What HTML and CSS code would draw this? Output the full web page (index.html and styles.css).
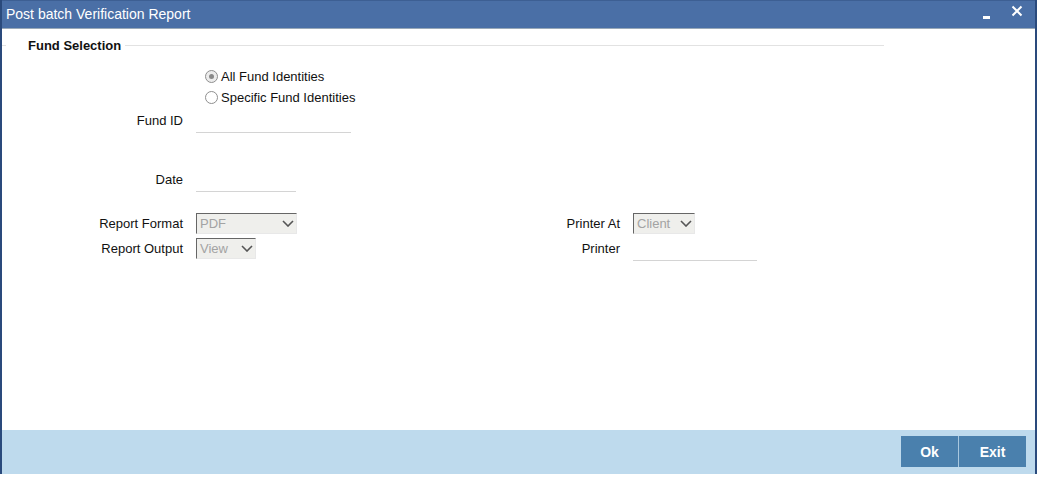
FILE: index.html
```html
<!DOCTYPE html>
<html lang="en">

<head>
    <meta charset="UTF-8">
    <meta name="viewport" content="width=device-width, initial-scale=1.0">
    <title>Post batch Verification Report</title>
    <link rel="stylesheet" href="styles.css">
</head>

<body>
    <section class="window">
        <section class="titlebar">
            <span class="title">Post batch Verification Report</span>
            <section class="title-tools">
                <span class="tool-min"></span>
                <svg class="tool-close" width="12" height="12" viewBox="0 0 12 12">
                    <path d="M1.5 1.5 L10.5 10.5 M10.5 1.5 L1.5 10.5" stroke="#fff" stroke-width="2" fill="none" />
                </svg>
            </section>
        </section>

        <section class="content">
            <section class="legend">
                <span class="legend-line short"></span>
                <span class="legend-text">Fund Selection</span>
                <span class="legend-line long"></span>
            </section>

            <section class="radios">
                <label class="radio-row"><span class="radio checked"></span>All Fund Identities</label>
                <label class="radio-row"><span class="radio"></span>Specific Fund Identities</label>
            </section>

            <section class="row row-fund">
                <span class="label">Fund ID</span>
                <span class="input w-fund"></span>
            </section>

            <section class="row row-date">
                <span class="label">Date</span>
                <span class="input w-date"></span>
            </section>

            <section class="row row-format">
                <span class="label">Report Format</span>
                <section class="field">
                    <span class="select w-pdf"><span>PDF</span>
                        <svg width="12" height="7" viewBox="0 0 12 7"><path d="M1 1 L6 6 L11 1" stroke="#555" stroke-width="1.6" fill="none" /></svg>
                    </span>
                </section>
                <span class="label label-right">Printer At</span>
                <span class="select w-client"><span>Client</span>
                    <svg width="12" height="7" viewBox="0 0 12 7"><path d="M1 1 L6 6 L11 1" stroke="#555" stroke-width="1.6" fill="none" /></svg>
                </span>
            </section>

            <section class="row row-output">
                <span class="label">Report Output</span>
                <section class="field">
                    <span class="select w-view"><span>View</span>
                        <svg width="12" height="7" viewBox="0 0 12 7"><path d="M1 1 L6 6 L11 1" stroke="#555" stroke-width="1.6" fill="none" /></svg>
                    </span>
                </section>
                <span class="label label-right">Printer</span>
                <span class="input w-printer"></span>
            </section>
        </section>

        <section class="footer">
            <button class="btn">Ok</button>
            <button class="btn btn-exit">Exit</button>
        </section>
    </section>
</body>

</html>
```

FILE: styles.css
```css
body {
    margin: 0;
    padding: 0;
    background: #fff;
    font-family: "Liberation Sans", Arial, sans-serif;
    font-size: 13px;
    color: #111;
}

.window {
    width: 1033px;
    height: 474px;
    border-left: 2px solid #2a4a7c;
    border-right: 2px solid #2a4a7c;
    display: flex;
    flex-direction: column;
}

.titlebar {
    height: 27px;
    background: #4a6fa6;
    border-top: 1px solid #3d5f93;
    border-bottom: 1px solid #98a8b8;
    display: flex;
    align-items: center;
    justify-content: space-between;
    color: #fff;
}

.title {
    font-size: 14px;
    padding-left: 4px;
    margin-top: -1px;
}

.title-tools {
    display: flex;
    align-items: center;
    gap: 21px;
    padding-right: 12px;
}

.tool-min {
    width: 7px;
    height: 3px;
    background: #fff;
    margin-top: 6px;
}

.tool-close {
    margin-top: -8px;
}

.content {
    flex: 1;
}

/* fieldset heading */
.legend {
    display: flex;
    align-items: center;
    height: 18px;
    margin-top: 7px;
}

.legend-line {
    height: 1px;
    background: #e2e2e2;
}

.legend-line.short {
    width: 4px;
    margin-right: 22px;
}

.legend-line.long {
    width: 759px;
    margin-left: 4px;
}

.legend-text {
    font-weight: 700;
}

.radios {
    margin-top: 12px;
    padding-left: 203px;
    display: flex;
    flex-direction: column;
    gap: 1px;
}

.radio-row {
    height: 20px;
    display: flex;
    align-items: center;
}

.radio {
    width: 11px;
    height: 11px;
    border: 1px solid #8f8f8f;
    border-radius: 50%;
    background: #fff;
    margin-right: 3px;
    display: flex;
    align-items: center;
    justify-content: center;
}

.radio.checked {
    background: #ececec;
}

.radio.checked::after {
    content: "";
    width: 5px;
    height: 5px;
    border-radius: 50%;
    background: #8a8a8a;
}

.row {
    display: flex;
    align-items: flex-start;
}

.label {
    width: 181px;
    height: 21px;
    line-height: 21px;
    text-align: right;
    margin-right: 13px;
}

.label-right {
    width: 124px;
}

.field {
    width: 300px;
}

.input {
    height: 22px;
    border-bottom: 1px solid #d4d4d4;
}

.row-fund {
    margin-top: 3px;
}

.row-fund .label {
    height: 22px;
    line-height: 22px;
}

.w-fund {
    width: 155px;
}

.row-date {
    margin-top: 36px;
}

.w-date {
    width: 100px;
}

.row-format {
    margin-top: 21px;
}

.row-output {
    margin-top: 4px;
}

.w-printer {
    width: 124px;
}

.select {
    height: 19px;
    border-top: 1px solid #666;
    border-left: 1px solid #666;
    border-right: 1px solid #e8e8e8;
    border-bottom: 1px solid #e8e8e8;
    background: #efefec;
    color: #a3a3a3;
    display: flex;
    align-items: center;
    justify-content: space-between;
    padding: 0 2px 0 3px;
    box-sizing: content-box;
}

.w-pdf {
    width: 94px;
}

.w-view {
    width: 53px;
}

.w-client {
    width: 55px;
}

.footer {
    height: 44px;
    background: #bedaed;
    display: flex;
    justify-content: flex-end;
    align-items: flex-start;
    padding-top: 6px;
    padding-right: 9px;
    box-sizing: border-box;
}

.btn {
    height: 31px;
    width: 57px;
    border: 0;
    padding: 0;
    background: #4a80ad;
    color: #fff;
    font-family: "Liberation Sans", Arial, sans-serif;
    font-size: 14px;
    font-weight: 700;
}

.btn-exit {
    width: 68px;
    border-left: 1px solid #a9c8df;
}
```
